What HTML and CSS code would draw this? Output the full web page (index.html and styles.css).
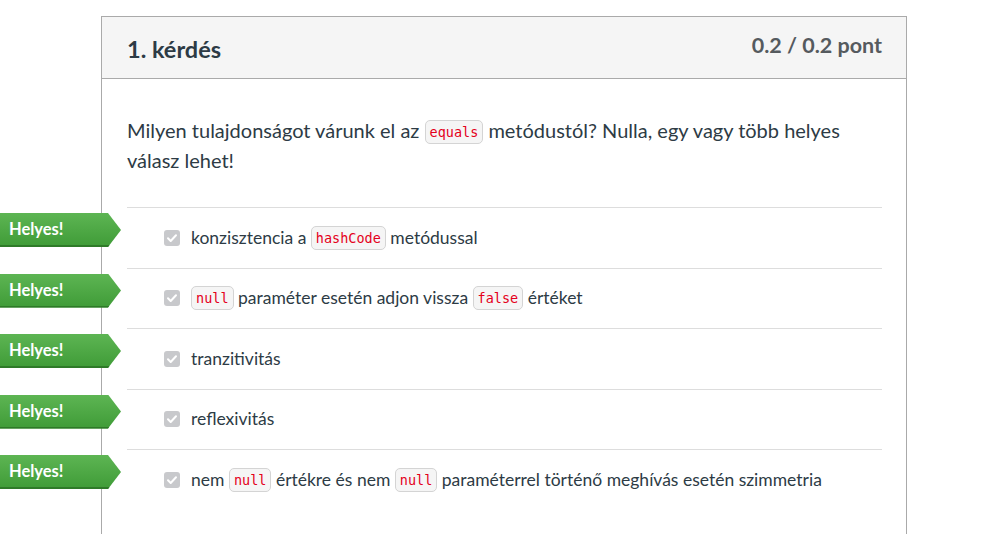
FILE: index.html
```html
<!DOCTYPE html>
<html lang="hu">
<head>
<meta charset="utf-8">
<link rel="stylesheet" href="styles.css">
</head>
<body>
<div class="card">
  <div class="card-header">
    <h2 class="title">1. kérdés</h2>
    <div class="points">0.2 / 0.2 pont</div>
  </div>
  <div class="card-body">
    <p class="question">Milyen tulajdonságot várunk el az <code>equals</code> metódustól? Nulla, egy vagy több helyes válasz lehet!</p>
    <ul class="answers">
      <li class="answer">
        <span class="flag">Helyes!</span>
        <span class="check"><svg viewBox="0 0 16 16" width="16" height="16"><path d="M4 8.3l2.7 2.7L12 5.3" fill="none" stroke="#fff" stroke-width="2" stroke-linecap="round" stroke-linejoin="round"/></svg></span>
        <span class="text">konzisztencia a <code>hashCode</code> metódussal</span>
      </li>
      <li class="answer">
        <span class="flag">Helyes!</span>
        <span class="check"><svg viewBox="0 0 16 16" width="16" height="16"><path d="M4 8.3l2.7 2.7L12 5.3" fill="none" stroke="#fff" stroke-width="2" stroke-linecap="round" stroke-linejoin="round"/></svg></span>
        <span class="text"><code>null</code> paraméter esetén adjon vissza <code>false</code> értéket</span>
      </li>
      <li class="answer">
        <span class="flag">Helyes!</span>
        <span class="check"><svg viewBox="0 0 16 16" width="16" height="16"><path d="M4 8.3l2.7 2.7L12 5.3" fill="none" stroke="#fff" stroke-width="2" stroke-linecap="round" stroke-linejoin="round"/></svg></span>
        <span class="text">tranzitivitás</span>
      </li>
      <li class="answer">
        <span class="flag">Helyes!</span>
        <span class="check"><svg viewBox="0 0 16 16" width="16" height="16"><path d="M4 8.3l2.7 2.7L12 5.3" fill="none" stroke="#fff" stroke-width="2" stroke-linecap="round" stroke-linejoin="round"/></svg></span>
        <span class="text">reflexivitás</span>
      </li>
      <li class="answer">
        <span class="flag">Helyes!</span>
        <span class="check"><svg viewBox="0 0 16 16" width="16" height="16"><path d="M4 8.3l2.7 2.7L12 5.3" fill="none" stroke="#fff" stroke-width="2" stroke-linecap="round" stroke-linejoin="round"/></svg></span>
        <span class="text">nem <code>null</code> értékre és nem <code>null</code> paraméterrel történő meghívás esetén szimmetria</span>
      </li>
    </ul>
  </div>
</div>
</body>
</html>
```

FILE: styles.css
```css
html, body {
  margin: 0;
  padding: 0;
  background: #fff;
  font-family: Lato, "Noto Sans", sans-serif;
  color: #2d3b45;
  overflow: hidden;
}

.card {
  margin: 16px 0 0 101px;
  width: 804px;
  height: 520px;
  border: 1px solid #aaaaaa;
  border-bottom: none;
}

.card-header {
  height: 61px;
  background: #f5f5f5;
  border-bottom: 1px solid #aaaaaa;
  display: flex;
  justify-content: space-between;
  align-items: flex-start;
  padding: 0 24px 0 25px;
}

.title {
  margin: 18px 0 0;
  font-size: 23.5px;
  font-weight: 700;
  line-height: 28px;
  color: #2d3b45;
}

.points {
  margin-top: 14px;
  font-size: 21.5px;
  font-weight: 700;
  line-height: 28px;
  color: #555a5e;
}

.card-body {
  padding: 36px 24px 0 25px;
}

.question {
  margin: 0 0 32px;
  font-size: 20px;
  line-height: 30px;
}

code {
  display: inline-block;
  font-family: "DejaVu Sans Mono", "Liberation Mono", monospace;
  font-size: 13.5px;
  line-height: 22px;
  color: #e4001b;
  background: #f5f5f5;
  border: 1px solid #d4d4d4;
  border-radius: 5px;
  padding: 0 4px;
  vertical-align: 1px;
}

.answers {
  list-style: none;
  margin: 0;
  padding: 0;
}

.answer {
  position: relative;
  box-sizing: border-box;
  height: 60.5px;
  border-top: 1px solid #dddddd;
  display: flex;
  align-items: center;
  padding-left: 37px;
  font-size: 17.5px;
}

.check {
  width: 16px;
  height: 16px;
  border-radius: 3px;
  background: #c8c9cc;
  display: flex;
  margin-right: 11px;
  flex: none;
}

.text {
  line-height: 24px;
}

.flag {
  position: absolute;
  left: -127px;
  top: 5px;
  width: 121px;
  height: 34px;
  box-sizing: border-box;
  padding-left: 9px;
  line-height: 32px;
  color: #fff;
  font-weight: 700;
  font-size: 16.5px;
  background: linear-gradient(#5db553, #3f9b37);
  box-shadow: inset 0 -2px 0 #2e7a28;
  clip-path: polygon(0 0, 108px 0, 121px 50%, 108px 100%, 0 100%);
}
```
